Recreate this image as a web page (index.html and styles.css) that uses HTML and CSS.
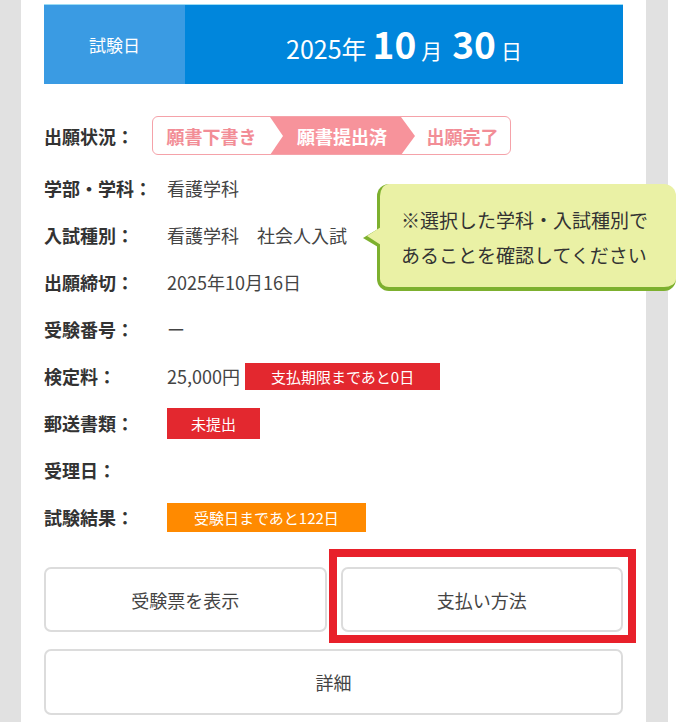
FILE: index.html
```html
<!DOCTYPE html>
<html lang="ja">
<head>
  <meta charset="UTF-8" />
  <meta name="viewport" content="width=device-width, initial-scale=1.0"/>
  <title>出願状況</title>
  <link rel="stylesheet" href="styles.css">
</head>
<body>
  <div class="page">
    <div class="card">

      <div class="exam-date">
        <div class="exam-date-label">試験日</div>
        <div class="exam-date-value">
          <span class="y">2025年</span>
          <span class="num">10</span><span class="unit">月</span>
          <span class="num">30</span><span class="unit">日</span>
        </div>
      </div>

      <div class="info">
        <div class="row row-status">
          <div class="label">出願状況：</div>
          <div class="steps">
            <div class="step step-1">願書下書き</div>
            <div class="step step-2 current">願書提出済</div>
            <div class="step step-3">出願完了</div>
          </div>
        </div>

        <div class="row">
          <div class="label">学部・学科：</div>
          <div class="value">看護学科</div>
        </div>

        <div class="row">
          <div class="label">入試種別：</div>
          <div class="value">看護学科　社会人入試</div>
          <div class="bubble">※選択した学科・入試種別で<br>あることを確認してください</div>
        </div>

        <div class="row">
          <div class="label">出願締切：</div>
          <div class="value">2025年10月16日</div>
        </div>

        <div class="row">
          <div class="label">受験番号：</div>
          <div class="value">ー</div>
        </div>

        <div class="row">
          <div class="label">検定料：</div>
          <div class="value">25,000円</div>
          <span class="badge badge-red">支払期限まであと0日</span>
        </div>

        <div class="row">
          <div class="label">郵送書類：</div>
          <span class="badge badge-red tall">未提出</span>
        </div>

        <div class="row">
          <div class="label">受理日：</div>
          <div class="value"></div>
        </div>

        <div class="row">
          <div class="label">試験結果：</div>
          <span class="badge badge-orange">受験日まであと122日</span>
        </div>
      </div>

      <div class="actions">
        <a class="btn" href="#">受験票を表示</a>
        <a class="btn marked" href="#">支払い方法</a>
        <a class="btn wide" href="#">詳細</a>
      </div>

    </div>
  </div>
</body>
</html>
```

FILE: styles.css
```css
body { margin: 0; background: #fff; font-family: "Noto Sans CJK JP", "Noto Sans", sans-serif; color: #333; }
.page { width: 625px; background: #e1e1e1; padding: 0 22px 0 21px; }
.card { background: #fff; padding: 4px 23px 8px; }

/* exam date header */
.exam-date { display: flex; height: 79px; border-top: 1px solid #9adcf4; color: #fff; }
.exam-date-label { width: 141px; background: #3a9be3; display: flex; align-items: center; justify-content: center; font-size: 17px; }
.exam-date-value { flex: 1; background: #0086dc; display: flex; align-items: baseline; justify-content: center; padding-top: 11px; box-sizing: border-box; }
.exam-date-value .y { font-size: 25px; margin-right: 6px; }
.exam-date-value .num { font-size: 37px; font-weight: bold; margin-right: 5px; }
.exam-date-value .unit { font-size: 21px; margin-right: 10px; }
.exam-date-value .unit:last-child { margin-right: 0; }

/* info rows */
.info { margin-top: 32px; display: flex; flex-direction: column; gap: 15px; }
.row { position: relative; display: flex; align-items: center; min-height: 32px; }
.row-status { margin-bottom: 2px; }
.row-status .label { width: 108px; }
.label { width: 123px; flex: none; font-size: 18px; font-weight: bold; color: #333; }
.value { font-size: 18px; color: #444; }

.steps { display: flex; width: 357px; height: 37px; border: 1.5px solid #f5a2a9; border-radius: 6px; overflow: hidden; }
.step { position: relative; display: flex; align-items: center; justify-content: center; font-size: 18px; font-weight: bold; color: #f28d96; }
.step-1 { width: 117px; z-index: 2; }
.step-1::after { content: ""; position: absolute; right: -13px; top: 0; border-top: 19px solid transparent; border-bottom: 19px solid transparent; border-left: 13px solid #fff; }
.step-2 { width: 131px; padding-left: 13px; box-sizing: border-box; background: #f7939b; color: #fff; z-index: 1; }
.step-2::after { content: ""; position: absolute; right: -14px; top: 0; border-top: 19px solid transparent; border-bottom: 19px solid transparent; border-left: 14px solid #f7939b; }
.step-3 { flex: 1; padding-left: 14px; }

.bubble { position: absolute; left: 333px; top: -35px; width: 273px; padding: 18px 2px 15px 21px; background: #eaf1a5; border-left: 3px solid #7db02e; border-bottom: 4px solid #7db02e; border-radius: 12px; font-size: 19px; line-height: 35px; color: #333; white-space: nowrap; z-index: 3; }
.bubble::before { content: ""; position: absolute; left: -17px; top: 45px; border-top: 9px solid transparent; border-bottom: 9px solid transparent; border-right: 15px solid #7db02e; }
.bubble::after { content: ""; position: absolute; left: -13px; top: 43px; border-top: 9px solid transparent; border-bottom: 9px solid transparent; border-right: 14px solid #eaf1a5; }

.badge { display: inline-block; padding: 0 26px; line-height: 27px; font-size: 15px; color: #fff; }
.badge-red { background: #e3282f; margin-left: 5px; }
.badge.tall { line-height: 31px; margin-left: 0; padding: 0 24px; }
.badge-orange { background: #ff8a00; padding: 0 27px; line-height: 29px; }

/* buttons */
.actions { display: grid; grid-template-columns: 1fr 1fr; gap: 17px 14px; margin-top: 34px; }
.btn { position: relative; display: flex; align-items: center; justify-content: center; height: 61px; border: 2px solid #dcdcdc; border-radius: 7px; background: #fff; color: #444; font-size: 18px; text-decoration: none; }
.btn.wide { grid-column: 1 / 3; height: 62px; }
.btn.marked::after { content: ""; position: absolute; left: -14px; right: -15px; top: -20px; bottom: -13px; border: 8px solid #e8202a; }
```
